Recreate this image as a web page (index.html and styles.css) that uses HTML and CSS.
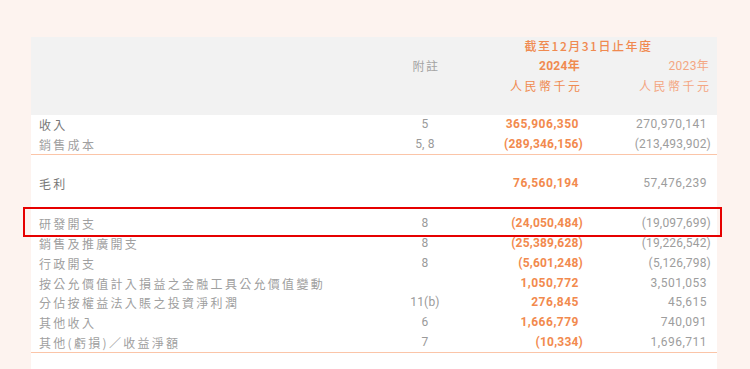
FILE: index.html
```html
<!DOCTYPE html>
<html lang="zh-Hant">
<head>
<meta charset="utf-8">
<title>綜合損益表</title>
<link rel="stylesheet" href="styles.css">
</head>
<body>
<div class="sheet">
  <div class="head">
    <div class="period">截至12月31日止年度</div>
    <div class="hc"></div>
    <div class="hc note-h">附註</div>
    <div class="hc y24 b">2024年</div>
    <div class="hc y23">2023年</div>
    <div class="hc"></div>
    <div class="hc"></div>
    <div class="hc y24 cjk">人民幣千元</div>
    <div class="hc y23 cjk">人民幣千元</div>
  </div>
  <div class="body">
    <div class="row dark"><span class="lbl">收入</span><span class="note">5</span><span class="v24">365,906,350</span><span class="v23">270,970,141</span></div>
    <div class="row line"><span class="lbl">銷售成本</span><span class="note">5, 8</span><span class="v24 n">(289,346,156)</span><span class="v23 n">(213,493,902)</span></div>
    <div class="row"><span class="lbl"></span><span class="note"></span><span class="v24"></span><span class="v23"></span></div>
    <div class="row dark"><span class="lbl">毛利</span><span class="note"></span><span class="v24">76,560,194</span><span class="v23">57,476,239</span></div>
    <div class="row"><span class="lbl"></span><span class="note"></span><span class="v24"></span><span class="v23"></span></div>
    <div class="row hl"><span class="lbl">研發開支</span><span class="note">8</span><span class="v24 n">(24,050,484)</span><span class="v23 n">(19,097,699)</span></div>
    <div class="row"><span class="lbl">銷售及推廣開支</span><span class="note">8</span><span class="v24 n">(25,389,628)</span><span class="v23 n">(19,226,542)</span></div>
    <div class="row"><span class="lbl">行政開支</span><span class="note">8</span><span class="v24 n">(5,601,248)</span><span class="v23 n">(5,126,798)</span></div>
    <div class="row"><span class="lbl">按公允價值計入損益之金融工具公允價值變動</span><span class="note"></span><span class="v24">1,050,772</span><span class="v23">3,501,053</span></div>
    <div class="row"><span class="lbl">分佔按權益法入賬之投資淨利潤</span><span class="note">11(b)</span><span class="v24">276,845</span><span class="v23">45,615</span></div>
    <div class="row"><span class="lbl">其他收入</span><span class="note">6</span><span class="v24">1,666,779</span><span class="v23">740,091</span></div>
    <div class="row line"><span class="lbl">其他(虧損)／收益淨額</span><span class="note">7</span><span class="v24 n">(10,334)</span><span class="v23">1,696,711</span></div>
  </div>
</div>
</body>
</html>
```
FILE: styles.css
```css
html, body {
  margin: 0;
  padding: 0;
  background: #fdf3ef;
  overflow: hidden;
  height: 369px;
}
.sheet {
  width: 686px;
  margin: 37px 0 0 31px;
  font-family: Roboto, "Noto Sans CJK TC", sans-serif;
}
.head {
  background: #f2f2f2;
  display: grid;
  grid-template-columns: 356px 60px 125px 129px;
  padding: 0 8px 19px 8px;
  height: 78px;
  box-sizing: border-box;
  line-height: 20px;
}
.period {
  grid-column: 3 / 5;
  text-align: center;
  padding-left: 13px;
  color: #f08a50;
  font-family: "Noto Sans CJK TC", sans-serif;
  font-size: 12px;
  font-weight: 500;
  letter-spacing: 1.5px;
  margin-top: -1px;
}
.hc {
  text-align: right;
  font-size: 12px;
  font-family: "Noto Sans CJK TC", sans-serif;
}
.note-h {
  text-align: center;
  color: #a4a4a4;
  letter-spacing: 1.5px;
  padding-left: 2px;
}
.y24 { color: #f08a50; }
.y23 { color: #f4a682; }
.b { font-weight: 700; font-family: Roboto, "Noto Sans CJK TC", sans-serif; letter-spacing: 0.3px; }
.y23:not(.cjk) { font-family: Roboto, "Noto Sans CJK TC", sans-serif; letter-spacing: 0.3px; }
.cjk { letter-spacing: 2.5px; margin-right: -2.5px; }
.body {
  background: #fff;
  height: 254px;
}
.row {
  display: grid;
  grid-template-columns: 356px 60px 125px 129px;
  padding: 0 8px;
  height: 19.82px;
  line-height: 19.82px;
  position: relative;
}
.row.line {
  box-shadow: inset 0 -1px 0 #fbc5a8;
}
.lbl {
  font-family: "Noto Sans CJK TC", sans-serif;
  font-size: 12px;
  letter-spacing: 2.3px;
  color: #a0a0a0;
  white-space: nowrap;
}
.dark .lbl { color: #787878; }
.note {
  text-align: center;
  font-size: 12px;
  color: #9a9a9a;
  letter-spacing: 0.2px;
}
.v24 {
  text-align: right;
  font-size: 12px;
  font-weight: 700;
  color: #f28a4e;
  letter-spacing: 0.5px;
  margin-right: 1px;
}
.v23 {
  text-align: right;
  font-size: 12px;
  color: #9d9d9d;
  letter-spacing: 0.5px;
  margin-right: 2px;
}
.v24.n, .v23.n { letter-spacing: 0.2px; }
.v24.n { margin-right: -3px; }
.v23.n { margin-right: -2px; }
.hl::after {
  content: "";
  position: absolute;
  left: -8px;
  right: -5px;
  top: -7px;
  bottom: -3px;
  border: 2px solid #e60000;
}
```
